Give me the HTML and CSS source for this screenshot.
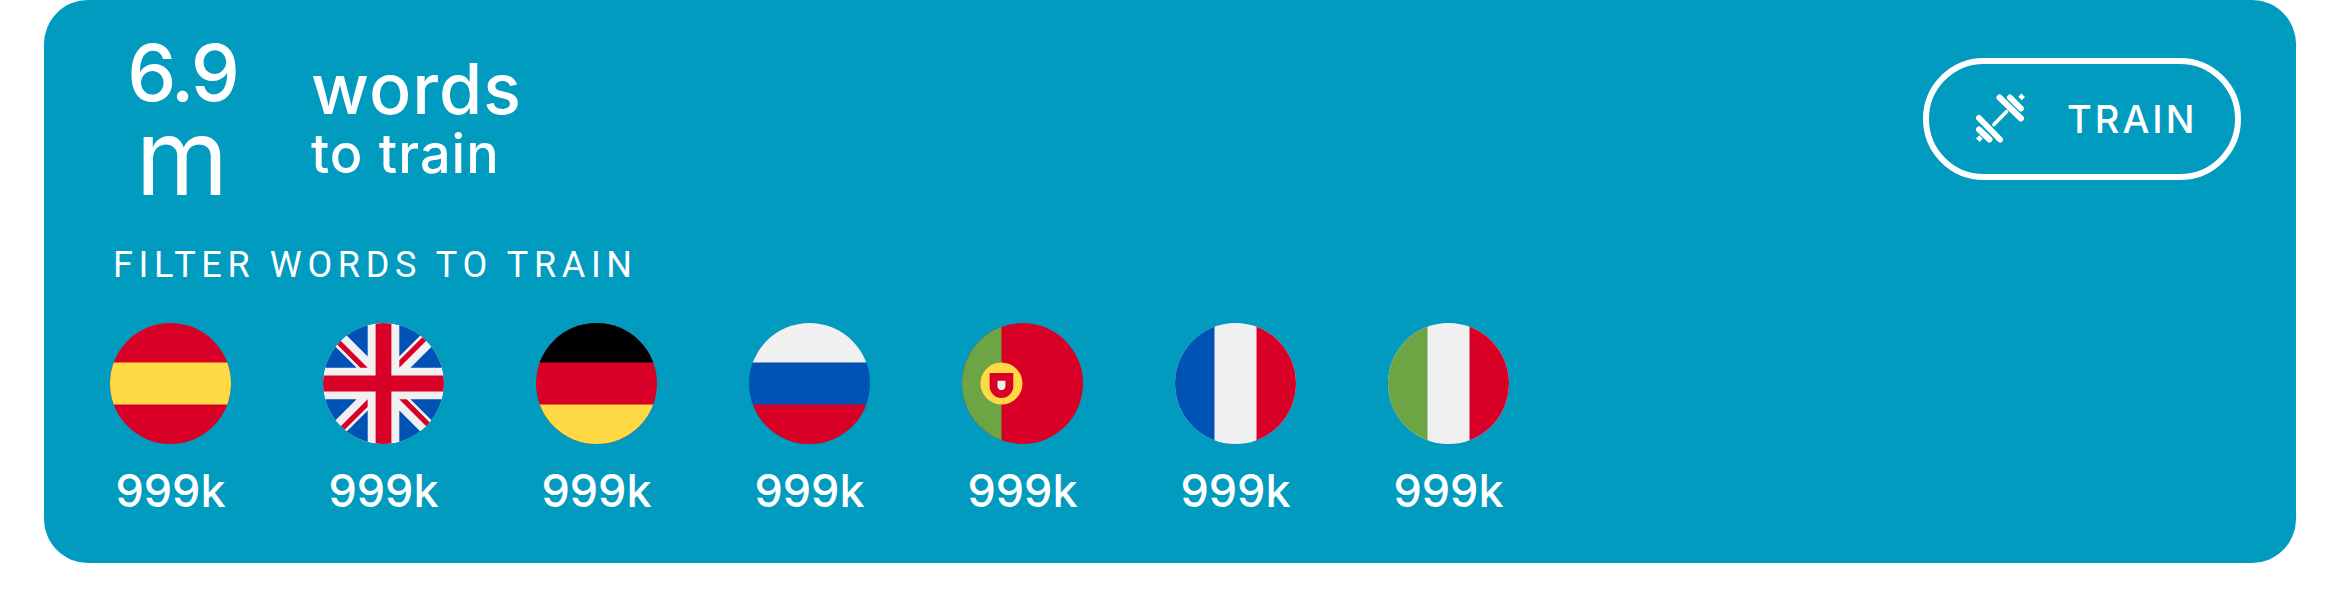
FILE: index.html
```html
<!DOCTYPE html>
<html lang="en">
<head>
<meta charset="utf-8">
<title>Words to train</title>
<link rel="stylesheet" href="styles.css">
</head>
<body>
<section class="card">
  <div class="head">
    <div class="count"><span class="count-num">6.9</span><span class="count-unit">m</span></div>
    <div class="caption"><span class="caption-main">words</span><span class="caption-sub">to train</span></div>
    <button class="train" type="button">
      <svg class="train-icon" viewBox="0 0 60 60" aria-hidden="true">
        <g fill="none" stroke="#fff" stroke-linecap="round">
          <path stroke-width="6" d="M29.5 8.5 51 29.5M40 8.5 51 19.5M9 29 30 50.5M9 40.5 19.5 50.5"/>
          <path stroke-width="3.6" d="M24 35.6 36.6 22.6"/>
          <path stroke-width="5" stroke-linecap="butt" d="M50 9.5 53.2 6.3M7.8 51.2 11 48"/>
        </g>
      </svg>
      <span class="train-label">TRAIN</span>
    </button>
  </div>
  <h2 class="filter-title">FILTER WORDS TO TRAIN</h2>
  <ul class="langs">
    <li class="lang">
      <svg class="flag" viewBox="0 0 512 512" aria-label="Spanish"><rect width="512" height="512" fill="#d80027"/><rect y="167" width="512" height="178" fill="#ffda44"/></svg>
      <span class="lang-count">999k</span>
    </li>
    <li class="lang">
      <svg class="flag" viewBox="0 0 512 512" aria-label="English"><circle cx="256" cy="256" r="256" fill="#f0f0f0"/><g fill="#0052b4"><path d="M52.92 100.142c-20.109 26.163-35.272 56.318-44.101 89.077h133.178L52.92 100.142z"/><path d="M503.181 189.219c-8.829-32.758-23.993-62.913-44.101-89.076l-89.075 89.076h133.176z"/><path d="M8.819 322.784c8.83 32.758 23.993 62.913 44.101 89.075l89.074-89.075H8.819z"/><path d="M411.858 52.921c-26.163-20.109-56.317-35.272-89.076-44.102v133.177l89.076-89.075z"/><path d="M100.142 459.079c26.163 20.109 56.318 35.272 89.076 44.102V370.005l-89.076 89.074z"/><path d="M189.217 8.819c-32.758 8.83-62.913 23.993-89.075 44.101l89.075 89.075V8.819z"/><path d="M322.783 503.181c32.758-8.83 62.913-23.993 89.075-44.101l-89.075-89.075v133.176z"/><path d="M370.005 322.784l89.075 89.076c20.108-26.162 35.272-56.318 44.101-89.076H370.005z"/></g><g fill="#d80027"><path d="M509.833 222.609H289.392V2.167C278.461.744 267.317 0 256 0c-11.319 0-22.461.744-33.391 2.167v220.441H2.167C.744 233.539 0 244.683 0 256c0 11.319.744 22.461 2.167 33.391h220.441v220.442C233.539 511.256 244.681 512 256 512c11.317 0 22.461-.744 33.391-2.167V289.392h220.442C511.256 278.461 512 267.317 512 256c0-11.319-.744-22.461-2.167-33.391z"/><path d="M322.783 322.784L437.019 437.02c5.254-5.252 10.266-10.743 15.048-16.435l-97.802-97.802h-31.482z"/><path d="M189.217 322.784h-.002L74.98 437.019c5.252 5.254 10.743 10.266 16.435 15.048l97.802-97.804v-31.479z"/><path d="M189.217 189.219v-.002L74.981 74.98c-5.254 5.252-10.266 10.743-15.048 16.435l97.803 97.803h31.481z"/><path d="M322.783 189.219L437.02 74.981c-5.252-5.254-10.743-10.266-16.435-15.047l-97.802 97.803v31.482z"/></g></svg>
      <span class="lang-count">999k</span>
    </li>
    <li class="lang">
      <svg class="flag" viewBox="0 0 512 512" aria-label="German"><rect width="512" height="512" fill="#d80027"/><rect width="512" height="167" fill="#000"/><rect y="345" width="512" height="167" fill="#ffda44"/></svg>
      <span class="lang-count">999k</span>
    </li>
    <li class="lang">
      <svg class="flag" viewBox="0 0 512 512" aria-label="Russian"><rect width="512" height="512" fill="#0052b4"/><rect width="512" height="167" fill="#f0f0f0"/><rect y="345" width="512" height="167" fill="#d80027"/></svg>
      <span class="lang-count">999k</span>
    </li>
    <li class="lang">
      <svg class="flag" viewBox="0 0 512 512" aria-label="Portuguese"><rect width="512" height="512" fill="#d80027"/><rect width="167" height="512" fill="#6da544"/><circle cx="167" cy="256" r="89" fill="#ffda44"/><path fill="#d80027" d="M116.87 211.478v55.652c0 27.662 22.424 50.087 50.087 50.087s50.087-22.424 50.087-50.087v-55.652z"/><path fill="#f0f0f0" d="M166.957 283.826c-9.206 0-16.696-7.49-16.696-16.696V244.87h33.391v22.26c0 9.206-7.49 16.696-16.695 16.696z"/></svg>
      <span class="lang-count">999k</span>
    </li>
    <li class="lang">
      <svg class="flag" viewBox="0 0 512 512" aria-label="French"><rect width="512" height="512" fill="#f0f0f0"/><rect width="167" height="512" fill="#0052b4"/><rect x="345" width="167" height="512" fill="#d80027"/></svg>
      <span class="lang-count">999k</span>
    </li>
    <li class="lang">
      <svg class="flag" viewBox="0 0 512 512" aria-label="Italian"><rect width="512" height="512" fill="#f0f0f0"/><rect width="167" height="512" fill="#6da544"/><rect x="345" width="167" height="512" fill="#d80027"/></svg>
      <span class="lang-count">999k</span>
    </li>
  </ul>
</section>
</body>
</html>
```
FILE: styles.css
```css
* { box-sizing: border-box; }
html, body { margin: 0; padding: 0; background: #fff; }
body { font-family: "Inter", "Liberation Sans", sans-serif; color: #fff; }

.card {
  margin-left: 44px;
  width: 2252px;
  height: 563px;
  padding: 34px 55px 0 66px;
  background: #019bc0;
  border-radius: 44px;
}

.head { display: flex; align-items: flex-start; height: 192px; }

.count {
  width: 144px;
  display: flex;
  flex-direction: column;
  align-items: center;
}
.count-num { font-size: 78px; font-weight: 500; line-height: 78px; letter-spacing: -3px; }
.count-unit { font-size: 106px; line-height: 90px; }

.caption {
  margin: 18px 0 0 57px;
  display: flex;
  flex-direction: column;
}
.caption-main { font-size: 70px; font-weight: 500; line-height: 74px; letter-spacing: 1px; }
.caption-sub { font-size: 54px; font-weight: 500; line-height: 56px; letter-spacing: 1px; }

.train {
  margin: 24px 0 0 auto;
  width: 318px;
  height: 122px;
  padding: 0 0 0 41px;
  display: flex;
  align-items: center;
  color: #fff;
  background: none;
  border: 6px solid #fff;
  border-radius: 61px;
  font: inherit;
}
.train-icon { width: 60px; height: 60px; flex: none; }
.train-label {
  margin-left: 37px;
  font-size: 38px;
  font-weight: 500;
  letter-spacing: 3px;
}

.filter-title {
  margin: 17px 0 0 3px;
  font-family: "Roboto", "Liberation Sans", sans-serif;
  font-size: 36px;
  font-weight: 400;
  line-height: 44px;
  letter-spacing: 5.65px;
}

.langs {
  list-style: none;
  margin: 36px 0 0;
  padding: 0;
  display: flex;
  gap: 92px;
}
.lang {
  width: 121px;
  display: flex;
  flex-direction: column;
  align-items: center;
}
.flag { width: 121px; height: 121px; border-radius: 50%; display: block; }
.lang-count {
  margin-top: 19px;
  font-size: 45px;
  font-weight: 500;
  line-height: 56px;
  white-space: nowrap;
}
```
